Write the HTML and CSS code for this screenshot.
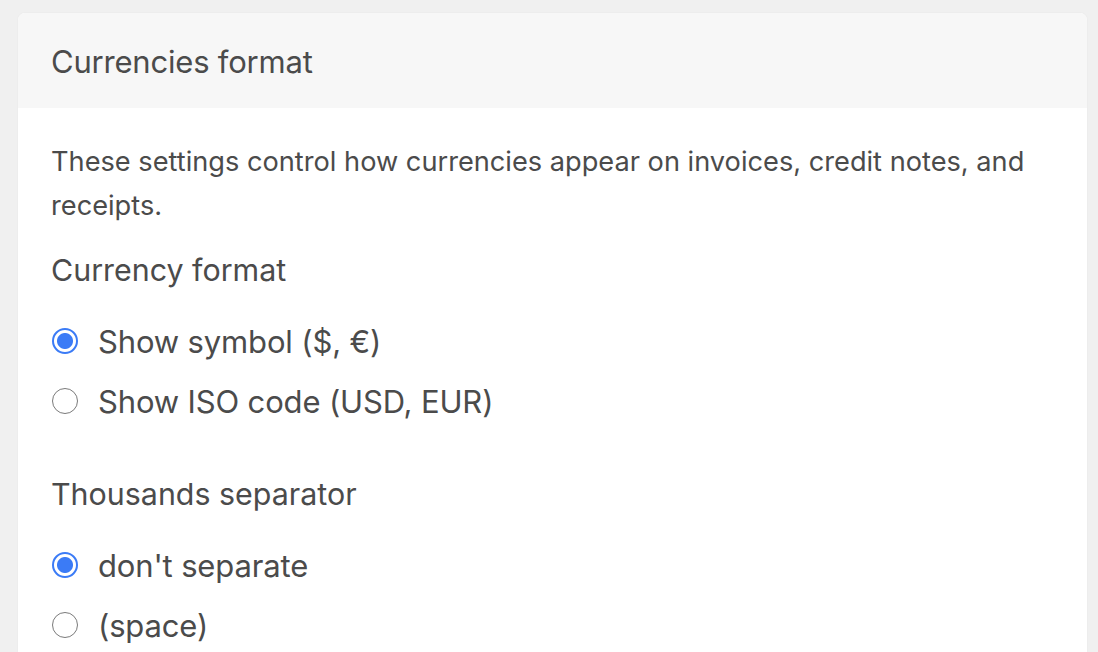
FILE: index.html
```html
<!DOCTYPE html>
<html lang="en">
<head>
<meta charset="utf-8">
<title>Currencies format</title>
<link rel="stylesheet" href="styles.css">
</head>
<body>
<div class="card">
  <div class="card-header">Currencies format</div>
  <div class="card-body">
    <p class="desc">These settings control how currencies appear on invoices, credit notes, and receipts.</p>
    <div class="group">
      <div class="group-label">Currency format</div>
      <label class="option"><span class="radio checked"></span><span>Show symbol ($, €)</span></label>
      <label class="option"><span class="radio"></span><span>Show ISO code (USD, EUR)</span></label>
    </div>
    <div class="group">
      <div class="group-label">Thousands separator</div>
      <label class="option"><span class="radio checked"></span><span>don't separate</span></label>
      <label class="option"><span class="radio"></span><span>(space)</span></label>
    </div>
  </div>
</div>
</body>
</html>
```
FILE: styles.css
```css
html, body {
  margin: 0;
  padding: 0;
  background: #f0f0f0;
  height: 100%;
  overflow: hidden;
}
body {
  font-family: Inter, "Noto Sans", "Liberation Sans", sans-serif;
  color: #4b4b4b;
  padding: 13px 11px 0 18px;
  box-sizing: border-box;
}
.card {
  background: #ffffff;
  border-radius: 7px 7px 0 0;
  box-shadow: 0 0 2px rgba(0,0,0,0.06);
  overflow: hidden;
  height: 100%;
}
.card-header {
  background: #f7f7f7;
  height: 95px;
  display: flex;
  align-items: center;
  padding: 1px 33px 0;
  box-sizing: border-box;
  font-size: 31px;
  letter-spacing: -0.2px;
}
.card-body {
  padding: 32px 33px 0;
}
.desc {
  margin: 0;
  font-size: 27.2px;
  line-height: 44px;
}
.group {
  margin-top: 20px;
}
.group + .group {
  margin-top: 41px;
}
.group-label {
  font-size: 30.4px;
  line-height: 44px;
  margin-bottom: 19px;
}
.option {
  display: flex;
  align-items: center;
  height: 60px;
  font-size: 31px;
  letter-spacing: -0.15px;
}
.radio {
  width: 26px;
  height: 26px;
  box-sizing: border-box;
  border-radius: 50%;
  border: 1.5px solid #7a7a7a;
  background: #fff;
  margin: 0 20px 0 1px;
  flex: none;
}
.radio.checked {
  border: 2.5px solid #3b7bf6;
  background: radial-gradient(circle, #3b7bf6 0 7.5px, #fff 8.5px);
}
```
